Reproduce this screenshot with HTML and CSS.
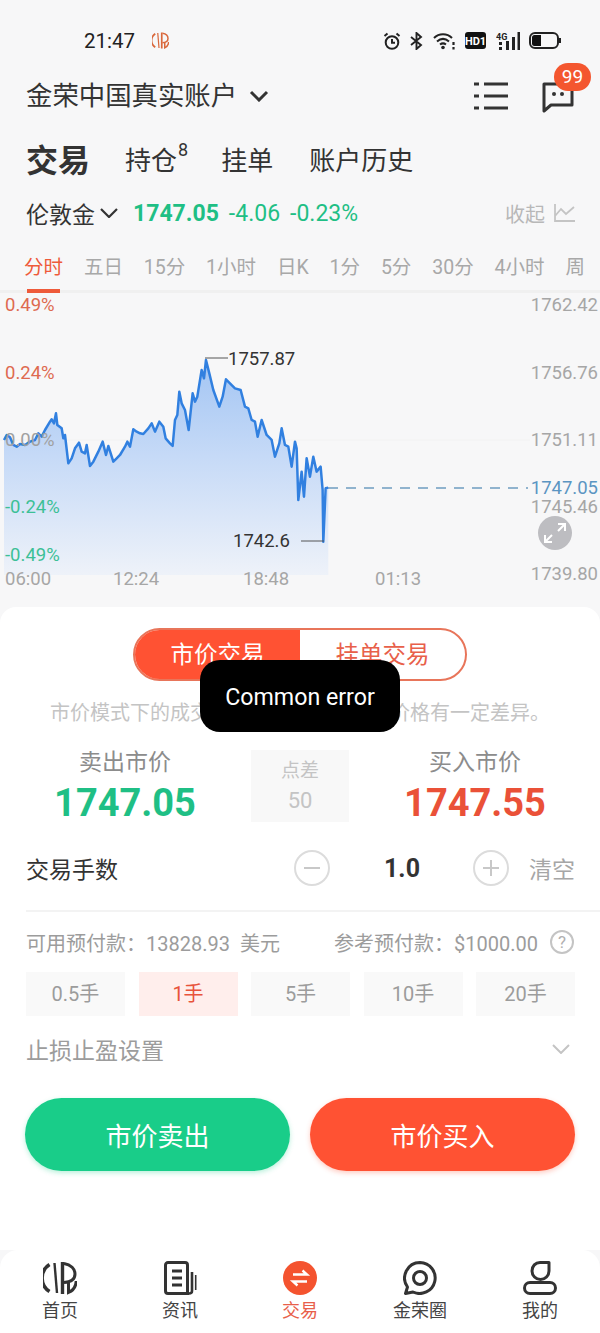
FILE: index.html
```html
<!DOCTYPE html>
<html lang="zh-CN">
<head>
    <meta charset="UTF-8">
    <meta name="viewport" content="width=device-width, initial-scale=1.0">
    <title>交易</title>
    <link rel="stylesheet" href="styles.css">
</head>
<body>

    <!-- Shared logo -->
    <svg class="defs" width="0" height="0">
        <symbol id="logo" viewBox="0 0 34 34">
            <path d="M6.500 3.500A16 16 0 0 0 6.500 30.500" fill="none" stroke="currentColor" stroke-width="3.600"/>
            <path d="M11.500 2L14 32" fill="none" stroke="currentColor" stroke-width="2.400"/>
            <path d="M19.500 1V33" fill="none" stroke="currentColor" stroke-width="3.400"/>
            <path d="M21 2.500C28 3.500 32 8 32 13C32 18 28 21 21 21.500" fill="none" stroke="currentColor" stroke-width="3"/>
            <path d="M25.500 21V31.500C30 29.500 33 25 33.200 20" fill="none" stroke="currentColor" stroke-width="3"/>
        </symbol>
    </svg>

    <!-- Status bar -->
    <div class="status-bar">
        <span class="status-time">21:47</span>
        <svg class="status-logo" width="17" height="17"><use href="#logo"/></svg>
        <div class="status-icons">
            <svg width="18" height="18" viewBox="0 0 18 18" fill="none" stroke="#222" stroke-width="2">
                <circle cx="9" cy="10.500" r="6.300"/>
                <path d="M9 7V10.800H12M1.500 4L4.500 1.500M16.500 4L13.500 1.500"/>
            </svg>
            <svg width="13" height="18" viewBox="0 0 13 18" fill="none" stroke="#222" stroke-width="1.900">
                <path d="M1 5L11 13L6.500 17V1L11 5L1 13"/>
            </svg>
            <svg width="23" height="18" viewBox="0 0 23 18" fill="none" stroke="#222" stroke-width="2">
                <path d="M1 6C6 1 14 1 19 6M4 9.500C8 6 12 6 16 9.500M7 12.500C9 11 11 11 13 12.500"/>
                <circle cx="10" cy="15.500" r="1.800" fill="#222" stroke="none"/>
                <path d="M20.500 10V13M20.500 15V17.500" stroke-width="2.200"/>
            </svg>
            <svg width="21" height="17" viewBox="0 0 21 17">
                <rect width="21" height="17" rx="3" fill="#111"/>
                <text x="10.500" y="13" class="hd-text">HD1</text>
            </svg>
            <svg width="24" height="18" viewBox="0 0 24 18">
                <text x="0" y="7.500" class="net-text">4G</text>
                <path d="M3 10h3v3h-3zM3 15h3v3h-3zM10 9h3v9h-3zM16 5h3v13h-3zM21.500 0h2.500v18h-2.500z" fill="#222"/>
            </svg>
            <svg width="33" height="17" viewBox="0 0 33 17">
                <rect x="1" y="1" width="28" height="15" rx="5" fill="none" stroke="#222" stroke-width="2"/>
                <path d="M3 5.500A2.500 2.500 0 0 1 5.500 3H12V14H5.500A2.500 2.500 0 0 1 3 11.500Z" fill="#111"/>
                <path d="M31 6V11" stroke="#222" stroke-width="2"/>
            </svg>
        </div>
    </div>

    <!-- Account header -->
    <div class="account-row">
        <span class="account-name">金荣中国真实账户</span>
        <svg class="account-arrow" width="20" height="12" viewBox="0 0 20 12" fill="none" stroke="#333" stroke-width="3">
            <path d="M2 2L10 10L18 2"/>
        </svg>
        <svg class="list-icon" width="34" height="28" viewBox="0 0 34 28" fill="none" stroke="#333" stroke-width="3">
            <path d="M0 2H5M10 2H34M0 14H5M10 14H34M0 26H5M10 26H34"/>
        </svg>
        <div class="msg-wrap">
            <svg width="34" height="34" viewBox="0 0 34 34" fill="none" stroke="#333" stroke-width="3">
                <path d="M3 5H31V26H10L3 32Z" stroke-linejoin="round"/>
                <circle cx="13" cy="15" r="2" fill="#333" stroke="none"/>
                <circle cx="21" cy="15" r="2" fill="#333" stroke="none"/>
            </svg>
            <span class="msg-badge">99</span>
        </div>
    </div>

    <div class="main-tabs">
        <span class="main-tab active">交易</span>
        <span class="main-tab">持仓<sup class="tab-count">8</sup></span>
        <span class="main-tab">挂单</span>
        <span class="main-tab">账户历史</span>
    </div>

    <div class="quote-row">
        <span class="quote-name">伦敦金</span>
        <svg class="quote-arrow" width="18" height="10" viewBox="0 0 18 10" fill="none" stroke="#333" stroke-width="2.200">
            <path d="M1 1L9 9L17 1"/>
        </svg>
        <span class="quote-price">1747.05</span>
        <span class="quote-change">-4.06</span>
        <span class="quote-change">-0.23%</span>
        <span class="quote-fold">收起</span>
        <svg width="21" height="18" viewBox="0 0 21 18" fill="none" stroke="#c4c4c4" stroke-width="1.800">
            <path d="M1 0V17H21M1 12L7 5L12 10L20 3"/>
        </svg>
    </div>

    <div class="period-tabs">
        <span class="period active">分时</span>
        <span class="period">五日</span>
        <span class="period">15分</span>
        <span class="period">1小时</span>
        <span class="period">日K</span>
        <span class="period">1分</span>
        <span class="period">5分</span>
        <span class="period">30分</span>
        <span class="period">4小时</span>
        <span class="period">周</span>
    </div>

    <!-- Chart: viewBox uses page coordinates -->
    <svg class="chart" width="600" height="307" viewBox="0 293 600 307">
        <defs>
            <linearGradient id="areaFill" x1="0" y1="0" x2="0" y2="1">
                <stop offset="0" stop-color="#a3c5f3"/>
                <stop offset="0.45" stop-color="#c6daf7"/>
                <stop offset="1" stop-color="#eef2f9"/>
            </linearGradient>
        </defs>

        <path class="grid-line" d="M0 440H530"/>
        <path class="dash-line" d="M328 488H528"/>

        <g transform="translate(0 340) scale(0.3333)">
            <polygon fill="url(#areaFill)" points="12,705 12,300 20,285 30,292 40,315 50,320 60,312 75,315 90,305 105,300 115,280 125,290 135,270 150,245 155,238 162,250 168,220 172,255 185,265 190,295 195,285 205,370 215,355 225,325 237,308 245,335 255,340 260,315 270,378 280,365 295,335 308,305 318,345 325,318 340,365 350,355 360,345 375,320 382,305 390,320 400,268 410,275 420,280 430,282 445,265 455,250 465,275 478,245 490,260 497,295 510,310 518,318 525,240 532,225 538,155 545,190 555,210 566,270 578,160 585,185 592,170 605,90 612,115 618,60 628,100 640,150 658,200 668,170 678,118 690,130 705,145 722,150 735,200 745,205 755,240 765,245 773,290 785,240 800,285 815,300 825,350 838,310 845,265 855,315 865,320 875,380 885,305 890,325 895,480 905,395 912,470 920,355 930,410 940,350 950,395 962,380 968,450 970,605 977,445 985,443 985,705"/>
            <polyline class="price-line" points="12,300 20,285 30,292 40,315 50,320 60,312 75,315 90,305 105,300 115,280 125,290 135,270 150,245 155,238 162,250 168,220 172,255 185,265 190,295 195,285 205,370 215,355 225,325 237,308 245,335 255,340 260,315 270,378 280,365 295,335 308,305 318,345 325,318 340,365 350,355 360,345 375,320 382,305 390,320 400,268 410,275 420,280 430,282 445,265 455,250 465,275 478,245 490,260 497,295 510,310 518,318 525,240 532,225 538,155 545,190 555,210 566,270 578,160 585,185 592,170 605,90 612,115 618,60 628,100 640,150 658,200 668,170 678,118 690,130 705,145 722,150 735,200 745,205 755,240 765,245 773,290 785,240 800,285 815,300 825,350 838,310 845,265 855,315 865,320 875,380 885,305 890,325 895,480 905,395 912,470 920,355 930,410 940,350 950,395 962,380 968,450 970,605 977,445 985,443"/>
        </g>

        <path class="mark-line" d="M205 358H228M301 541H324"/>

        <text class="lbl up" x="5" y="311">0.49%</text>
        <text class="lbl up" x="5" y="379">0.24%</text>
        <text class="lbl flat" x="5" y="446">0.00%</text>
        <text class="lbl down" x="5" y="513">-0.24%</text>
        <text class="lbl down" x="5" y="561">-0.49%</text>

        <text class="lbl axis end" x="598" y="311">1762.42</text>
        <text class="lbl axis end" x="598" y="379">1756.76</text>
        <text class="lbl axis end" x="598" y="446">1751.11</text>
        <text class="lbl last end" x="598" y="494">1747.05</text>
        <text class="lbl axis end" x="598" y="513">1745.46</text>
        <text class="lbl axis end" x="598" y="580">1739.80</text>

        <text class="lbl axis" x="5" y="585">06:00</text>
        <text class="lbl axis" x="113" y="585">12:24</text>
        <text class="lbl axis" x="243" y="585">18:48</text>
        <text class="lbl axis" x="375" y="585">01:13</text>

        <text class="lbl mark" x="228" y="365">1757.87</text>
        <text class="lbl mark" x="233" y="547">1742.6</text>

        <circle cx="555" cy="533" r="17" fill="#bdbdc1"/>
        <path d="M558 524H565V531M565 524L558 531M545 535V542H552M545 542L552 535" fill="none" stroke="#fff" stroke-width="2"/>
    </svg>

    <!-- Order panel -->
    <div class="panel">
        <div class="mode-switch">
            <span class="mode active">市价交易</span>
            <span class="mode">挂单交易</span>
        </div>
        <p class="mode-note">市价模式下的成交价格可能与下单时的价格有一定差异。</p>

        <div class="price-row">
            <div class="price-col">
                <span class="price-title">卖出市价</span>
                <span class="price-num sell">1747.05</span>
            </div>
            <div class="spread">
                <span>点差</span>
                <span class="spread-num">50</span>
            </div>
            <div class="price-col">
                <span class="price-title">买入市价</span>
                <span class="price-num buy">1747.55</span>
            </div>
        </div>

        <div class="lot-row">
            <span class="lot-label">交易手数</span>
            <span class="round-btn"><svg width="20" height="20" viewBox="0 0 20 20" stroke="#c8c8c8" stroke-width="2"><path d="M2 10H18"/></svg></span>
            <span class="lot-value">1.0</span>
            <span class="round-btn"><svg width="20" height="20" viewBox="0 0 20 20" stroke="#c8c8c8" stroke-width="2"><path d="M2 10H18M10 2V18"/></svg></span>
            <span class="lot-clear">清空</span>
        </div>

        <div class="funds-row">
            <span>可用预付款：13828.93&nbsp; 美元</span>
            <span class="funds-right">参考预付款：$1000.00</span>
            <span class="help">?</span>
        </div>

        <div class="chips">
            <span class="chip">0.5手</span>
            <span class="chip on">1手</span>
            <span class="chip">5手</span>
            <span class="chip">10手</span>
            <span class="chip">20手</span>
        </div>

        <div class="stop-row">
            <span>止损止盈设置</span>
            <svg width="18" height="10" viewBox="0 0 18 10" fill="none" stroke="#c4c4c4" stroke-width="2">
                <path d="M1 1L9 9L17 1"/>
            </svg>
        </div>

        <div class="action-row">
            <button class="action sell-btn">市价卖出</button>
            <button class="action buy-btn">市价买入</button>
        </div>

        <div class="toast">Common error</div>
    </div>

    <!-- Bottom nav -->
    <div class="bottom-nav">
        <div class="nav-item">
            <svg class="nav-logo" width="34" height="34"><use href="#logo"/></svg>
            <span class="nav-text">首页</span>
        </div>
        <div class="nav-item">
            <svg width="34" height="34" viewBox="0 0 34 34" fill="none" stroke="#333" stroke-width="3">
                <path d="M2.500 4A2.500 2.500 0 0 1 5 1.500H22A2.500 2.500 0 0 1 24.500 4V32.500H5A2.500 2.500 0 0 1 2.500 30Z"/>
                <path d="M9 10H19M9 17H19M9 24H19"/>
                <path d="M29 11V30C29 31.500 28 32.500 26 32.500" stroke-width="2.600"/>
                <path d="M32.700 14V29" stroke-width="1.600"/>
            </svg>
            <span class="nav-text">资讯</span>
        </div>
        <div class="nav-item active">
            <svg width="34" height="34" viewBox="0 0 34 34">
                <circle cx="17" cy="17" r="17" fill="#f4532f"/>
                <path d="M10 13.500H24L19.500 9.500M24 20.500H10L14.500 24.500" fill="none" stroke="#fff" stroke-width="2.400"/>
            </svg>
            <span class="nav-text">交易</span>
        </div>
        <div class="nav-item">
            <svg width="34" height="34" viewBox="0 0 34 34" fill="none" stroke="#333" stroke-width="3">
                <path d="M17 1.500A15.500 15.500 0 1 1 10 31L2.500 32.500L4.500 26A15.500 15.500 0 0 1 17 1.500Z" stroke-linejoin="round"/>
                <circle cx="17" cy="17" r="6.500"/>
            </svg>
            <span class="nav-text">金荣圈</span>
        </div>
        <div class="nav-item">
            <svg width="34" height="34" viewBox="0 0 34 34" fill="none" stroke="#333" stroke-width="3">
                <path d="M26 1.500V10A8.500 8.500 0 0 1 9 10C9 5 12.500 1.500 17 1.500Z" stroke-linejoin="round"/>
                <rect x="1.500" y="21.500" width="31" height="11" rx="5.500"/>
            </svg>
            <span class="nav-text">我的</span>
        </div>
    </div>

</body>
</html>
```
FILE: styles.css
```css
* {
    box-sizing: border-box;
}

body {
    margin: 0;
    width: 600px;
    height: 1333px;
    overflow: hidden;
    background-color: #f7f7f8;
    color: #333;
    font-family: Roboto, "Noto Sans CJK SC", sans-serif;
}

.defs {
    position: absolute;
}

/* Status bar */
.status-bar {
    display: flex;
    align-items: center;
    height: 80px;
    padding: 1px 38px 0 84px;
}

.status-time {
    font-size: 20.5px;
    color: #222;
}

.status-logo {
    margin-left: 17px;
    color: #d9683c;
}

.status-icons {
    display: flex;
    align-items: center;
    gap: 9.5px;
    margin-left: auto;
}

.hd-text {
    font-size: 11px;
    font-weight: 700;
    fill: #fff;
    text-anchor: middle;
}

.net-text {
    font-size: 9px;
    font-weight: 700;
    fill: #222;
}

/* Account header */
.account-row {
    display: flex;
    align-items: center;
    height: 32px;
    padding: 0 25px 0 26px;
}

.account-name {
    font-size: 26.4px;
    line-height: 32px;
}

.account-arrow {
    margin-left: 12px;
}

.list-icon {
    margin-left: auto;
}

.msg-wrap {
    position: relative;
    width: 34px;
    height: 34px;
    margin-left: 33px;
}

.msg-badge {
    position: absolute;
    top: -16px;
    left: 13px;
    width: 37px;
    height: 28px;
    border-radius: 14px;
    background-color: #f4562f;
    color: #fff;
    font-size: 19px;
    line-height: 28px;
    text-align: center;
}

/* Main tabs */
.main-tabs {
    display: flex;
    align-items: center;
    height: 48px;
    margin-top: 24px;
    padding: 1px 0 0 26px;
}

.main-tab {
    margin-right: 36px;
    font-size: 26px;
    line-height: 48px;
    white-space: nowrap;
}

.main-tab.active {
    margin-right: 35px;
    font-size: 32px;
    font-weight: 700;
}

.tab-count {
    margin-left: 1px;
    margin-right: -3px;
    font-size: 18px;
    line-height: 0;
    vertical-align: 14px;
}

/* Quote row */
.quote-row {
    display: flex;
    align-items: center;
    height: 46px;
    margin-top: 6px;
    padding: 0 25px 0 26px;
}

.quote-name {
    font-size: 23px;
}

.quote-arrow {
    margin-left: 5px;
    margin-right: 15px;
}

.quote-price {
    margin-right: 10px;
    color: #1fbf85;
    font-size: 23px;
    font-weight: 700;
}

.quote-change {
    margin-right: 10px;
    color: #1fbf85;
    font-size: 23px;
}

.quote-fold {
    margin-left: auto;
    margin-right: 9px;
    color: #b8b8b8;
    font-size: 20px;
}

/* Period tabs */
.period-tabs {
    display: flex;
    justify-content: space-between;
    height: 49px;
    margin-top: 8px;
    padding: 8px 15px 0 24px;
    border-bottom: 3px solid #f0f0f0;
}

.period {
    color: #a8a8a8;
    font-size: 19.5px;
    line-height: 32px;
    white-space: nowrap;
}

.period.active {
    position: relative;
    color: #ee5a3a;
}

.period.active::after {
    content: "";
    position: absolute;
    left: 3px;
    right: 3px;
    bottom: -3px;
    height: 4px;
    background-color: #ee5a3a;
}

/* Chart */
.chart {
    display: block;
    margin-bottom: 7px;
}

.grid-line {
    stroke: #f2f2f2;
    stroke-width: 1;
}

.dash-line {
    stroke: #6f9dc0;
    stroke-width: 1.5;
    stroke-dasharray: 10 8;
}

.price-line {
    fill: none;
    stroke: #3180e0;
    stroke-width: 7.5;
    stroke-linejoin: round;
}

.mark-line {
    fill: none;
    stroke: #555;
    stroke-width: 1;
}

.lbl {
    font-size: 18.5px;
}

.lbl.up {
    fill: #de6a50;
}

.lbl.flat {
    fill: #a0a0a0;
}

.lbl.down {
    fill: #3cc096;
}

.lbl.axis {
    fill: #a6a6a6;
}

.lbl.last {
    fill: #5b95c2;
}

.lbl.end {
    text-anchor: end;
}

.lbl.mark {
    fill: #333;
}

/* Order panel */
.panel {
    position: relative;
    height: 643px;
    padding-top: 21px;
    border-radius: 16px 16px 0 0;
    background-color: #fff;
}

.mode-switch {
    display: flex;
    width: 334px;
    height: 53px;
    margin: 0 auto;
    overflow: hidden;
    border: 2px solid #e8755a;
    border-radius: 27px;
}

.mode {
    flex: 1;
    color: #e8604a;
    font-size: 23.5px;
    line-height: 51px;
    text-align: center;
}

.mode.active {
    background-color: #ff5233;
    color: #fff;
}

.mode-note {
    margin: 18px 0 0;
    color: #c4c4c4;
    font-size: 20px;
    line-height: 28px;
    text-align: center;
}

.price-row {
    display: flex;
    justify-content: center;
    gap: 26px;
    margin-top: 22px;
    padding: 0 25px;
}

.price-col {
    display: flex;
    flex-direction: column;
    align-items: center;
    width: 200px;
}

.price-title {
    color: #8c8c8c;
    font-size: 23px;
    line-height: 27px;
}

.price-num {
    margin-top: 2px;
    font-size: 38px;
    font-weight: 700;
    line-height: 50px;
}

.price-num.sell {
    color: #1fbf85;
}

.price-num.buy {
    color: #ea5138;
}

.spread {
    display: flex;
    flex-direction: column;
    align-items: center;
    flex-shrink: 0;
    width: 98px;
    height: 72px;
    margin-top: 1px;
    padding-top: 7px;
    background-color: #f8f8f8;
    color: #c4c4c4;
    font-size: 19px;
    line-height: 28px;
}

.spread-num {
    font-size: 22px;
    line-height: 32px;
}

.lot-row {
    display: flex;
    align-items: center;
    height: 80px;
    margin: 0 0 2px 26px;
    white-space: nowrap;
}

.lot-label {
    font-size: 23px;
}

.round-btn {
    display: flex;
    align-items: center;
    justify-content: center;
    flex-shrink: 0;
    width: 36px;
    height: 36px;
    margin-left: 176px;
    border: 2px solid #dcdcdc;
    border-radius: 50%;
}

.lot-value {
    width: 54px;
    margin-left: 45px;
    font-size: 25px;
    font-weight: 700;
    text-align: center;
}

.lot-value + .round-btn {
    margin-left: 44px;
}

.lot-clear {
    margin-left: 20px;
    color: #a6a6a6;
    font-size: 23px;
}

.funds-row {
    display: flex;
    align-items: center;
    height: 62px;
    margin-left: 26px;
    padding-right: 26px;
    border-top: 2px solid #f3f3f3;
    color: #9c9c9c;
    font-size: 20px;
    white-space: nowrap;
}

.funds-right {
    margin-left: auto;
}

.help {
    width: 24px;
    height: 24px;
    margin-left: 12px;
    border: 2px solid #c4c4c4;
    border-radius: 50%;
    color: #b0b0b0;
    font-size: 17px;
    line-height: 20px;
    text-align: center;
}

.chips {
    display: flex;
    justify-content: space-between;
    height: 44px;
    padding: 0 25px 0 26px;
}

.chip {
    width: 99px;
    background-color: #f9f9f9;
    color: #9c9c9c;
    font-size: 20px;
    line-height: 44px;
    text-align: center;
}

.chip.on {
    background-color: #ffeeec;
    color: #e8533b;
}

.stop-row {
    display: flex;
    align-items: center;
    justify-content: space-between;
    height: 50px;
    margin-top: 8px;
    padding: 0 30px 0 26px;
    color: #9c9c9c;
    font-size: 23px;
}

.action-row {
    display: flex;
    justify-content: space-between;
    margin-top: 24px;
    padding: 0 25px;
}

.action {
    width: 265px;
    height: 73px;
    border: none;
    border-radius: 37px;
    color: #fff;
    font-family: inherit;
    font-size: 26px;
}

.sell-btn {
    background-color: #19cd89;
    box-shadow: 0 2px 5px rgba(25, 205, 137, 0.3);
}

.buy-btn {
    background-color: #ff5233;
    box-shadow: 0 2px 5px rgba(255, 82, 51, 0.3);
}

.toast {
    position: absolute;
    top: 53px;
    left: 200px;
    width: 200px;
    height: 72px;
    border-radius: 20px;
    background-color: #000;
    color: #fff;
    font-size: 23.2px;
    line-height: 75px;
    text-align: center;
}

/* Bottom nav */
.bottom-nav {
    display: flex;
    height: 83px;
    padding-top: 11px;
    border-radius: 18px 18px 0 0;
    background-color: #fff;
}

.nav-item {
    display: flex;
    flex-direction: column;
    align-items: center;
    flex: 1;
    color: #444;
}

.nav-text {
    margin-top: 2px;
    font-size: 18px;
    line-height: 28px;
}

.nav-item.active {
    color: #e8604a;
}

.nav-logo {
    color: #333;
}
```
